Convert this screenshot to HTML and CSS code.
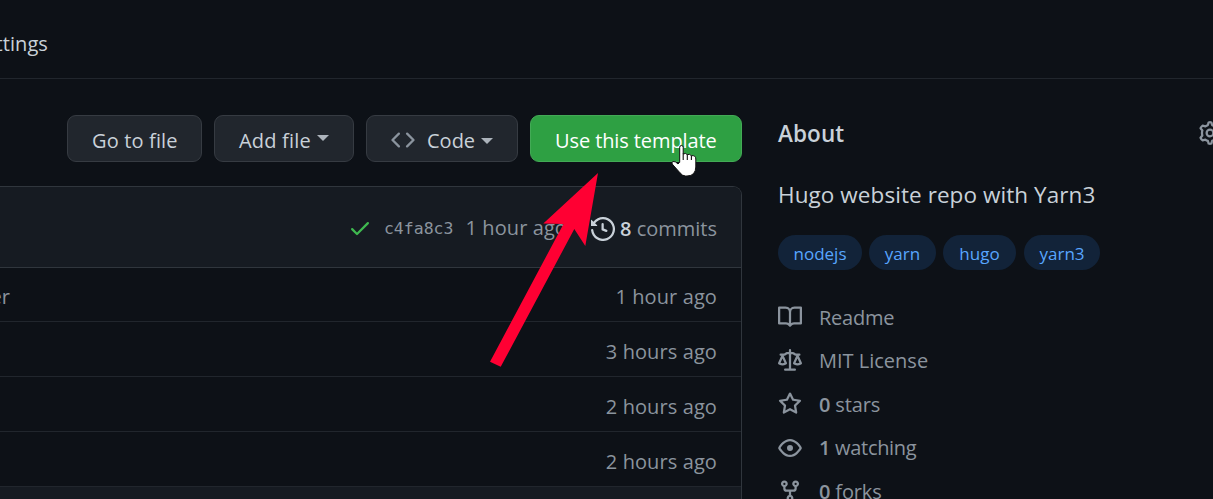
FILE: index.html
```
<!DOCTYPE html>
<html lang="en">
<head>
<meta charset="utf-8">
<title>Repository</title>
<link rel="stylesheet" href="styles.css">
</head>
<body>
<nav class="tabs"><span class="tab t-set">Settings</span></nav>
<div class="layout">
  <main class="main">
    <div class="actions">
      <button class="btn b-go"><span class="t-go">Go to file</span></button>
      <button class="btn b-add"><span class="t-add">Add file</span><i class="caret up"></i></button>
      <button class="btn b-code"><svg class="icon code" viewBox="0 0 16 16"><path d="M4.72 3.22a.75.75 0 011.06 1.06L2.06 8l3.72 3.72a.75.75 0 11-1.06 1.06L.47 8.53a.75.75 0 010-1.06l4.25-4.25zm6.56 0a.75.75 0 10-1.06 1.06L13.94 8l-3.72 3.72a.75.75 0 101.06 1.06l4.25-4.25a.75.75 0 000-1.06l-4.25-4.25z"/></svg><span class="t-code">Code</span><i class="caret"></i></button>
      <button class="btn primary b-use"><span class="t-use">Use this template</span></button>
    </div>
    <section class="files">
      <div class="commit">
        <svg class="icon check" viewBox="0 0 16 16"><path d="M13.78 4.22a.75.75 0 010 1.06l-7.25 7.25a.75.75 0 01-1.06 0L2.22 9.28a.75.75 0 011.06-1.06L6 10.94l6.72-6.72a.75.75 0 011.06 0z"/></svg>
        <span class="sha">c4fa8c3</span>
        <span class="when t-hour">1 hour ago</span>
        <svg class="icon history" viewBox="0 0 16 16"><path d="M1.643 3.143L.427 1.927A.25.25 0 000 2.104V5.75c0 .138.112.25.25.25h3.646a.25.25 0 00.177-.427L2.715 4.215a6.5 6.5 0 11-1.18 4.458.75.75 0 10-1.493.154 8.001 8.001 0 101.6-5.684zM7.75 4a.75.75 0 01.75.75v2.992l2.028.812a.75.75 0 01-.557 1.392l-2.5-1A.75.75 0 017 8.25v-3.5A.75.75 0 017.75 4z"/></svg>
        <span class="commits t-com"><b>8</b> commits</span>
      </div>
      <div class="row"><span class="msg">header</span><span class="t-hour">1 hour ago</span></div>
      <div class="row"><span class="t-hours">3 hours ago</span></div>
      <div class="row"><span class="t-hours">2 hours ago</span></div>
      <div class="row"><span class="t-hours">2 hours ago</span></div>
      <div class="readme"></div>
    </section>
  </main>
  <aside class="side">
    <div class="side-head"><h2 class="t-about">About</h2><svg class="icon gear" viewBox="0 0 16 16"><g fill="none" stroke="currentColor" stroke-width="1.5"><circle cx="8" cy="8" r="2.25"/><path stroke-linejoin="round" d="M7.1.95Q8 .6 8.9.95L9.4 2.7Q10.4 3 11.1 3.6L12.9 3.1Q13.9 3.8 14.3 4.8L13.1 6.3Q13.6 8 13.1 9.7L14.3 11.2Q13.9 12.2 12.9 12.9L11.1 12.4Q10.4 13 9.4 13.3L8.9 15.05Q8 15.4 7.1 15.05L6.6 13.3Q5.6 13 4.9 12.4L3.1 12.9Q2.1 12.2 1.7 11.2L2.9 9.7Q2.4 8 2.9 6.3L1.7 4.8Q2.1 3.8 3.1 3.1L4.9 3.6Q5.6 3 6.6 2.7Z"/></g></svg></div>
    <p class="desc"><span class="t-desc">Hugo website repo with Yarn3</span></p>
    <div class="topics"><a class="topic p1">nodejs</a><a class="topic p2">yarn</a><a class="topic p3">hugo</a><a class="topic p4">yarn3</a></div>
    <ul class="meta">
      <li><svg class="icon" viewBox="0 0 16 16"><path fill-rule="evenodd" d="M0 1.75A.75.75 0 01.75 1h4.253c1.227 0 2.317.59 3 1.501A3.744 3.744 0 0111.006 1h4.245a.75.75 0 01.75.75v10.5a.75.75 0 01-.75.75h-4.507a2.25 2.25 0 00-1.591.659l-.622.621a.75.75 0 01-1.06 0l-.622-.621A2.25 2.25 0 005.258 13H.75a.75.75 0 01-.75-.75V1.75zm8.755 3a2.25 2.25 0 012.25-2.25H14.5v9h-3.757c-.71 0-1.4.201-1.992.572l.004-7.322zm-1.504 7.324l.004-5.073-.002-2.253A2.25 2.25 0 005.003 2.5H1.5v9h3.757a3.75 3.75 0 011.994.574z"/></svg><span class="t-read">Readme</span></li>
      <li><svg class="icon" viewBox="0 0 16 16"><path fill-rule="evenodd" d="M8.75.75a.75.75 0 00-1.5 0V2h-.984c-.305 0-.604.08-.869.23l-1.288.737A.25.25 0 013.984 3H1.75a.75.75 0 000 1.5h.428L.066 9.192a.75.75 0 00.154.838l.53-.53-.53.53v.001l.002.002.002.002.006.006.016.015.045.04a3.514 3.514 0 00.686.45A4.492 4.492 0 003 11c.88 0 1.556-.22 2.023-.454a3.515 3.515 0 00.686-.45l.045-.04.016-.015.006-.006.002-.002.001-.002L5.25 9.5l.53.53a.75.75 0 00.154-.838L3.822 4.5h.162c.305 0 .604-.08.869-.23l1.289-.737a.25.25 0 01.124-.033h.984V13h-2.5a.75.75 0 000 1.5h6.5a.75.75 0 000-1.5h-2.5V3.5h.984a.25.25 0 01.124.033l1.29.736c.264.152.563.231.868.231h.162l-2.112 4.692a.75.75 0 00.154.838l.53-.53-.53.53v.001l.002.002.002.002.006.006.016.015.045.04a3.517 3.517 0 00.686.45A4.492 4.492 0 0013 11c.88 0 1.556-.22 2.023-.454a3.512 3.512 0 00.686-.45l.045-.04.01-.01.006-.005.006-.006.002-.002.001-.002-.529-.531.53.53a.75.75 0 00.154-.838L13.823 4.5h.427a.75.75 0 000-1.5h-2.234a.25.25 0 01-.124-.033l-1.29-.736A1.75 1.75 0 009.735 2H8.75V.75zM1.695 9.227c.285.135.718.273 1.305.273s1.02-.138 1.305-.273L3 6.327l-1.305 2.9zm10 0c.285.135.718.273 1.305.273s1.02-.138 1.305-.273L13 6.327l-1.305 2.9z"/></svg><span class="t-mit">MIT License</span></li>
      <li><svg class="icon" viewBox="0 0 16 16"><path fill-rule="evenodd" d="M8 .25a.75.75 0 01.673.418l1.882 3.815 4.21.612a.75.75 0 01.416 1.279l-3.046 2.97.719 4.192a.75.75 0 01-1.088.791L8 12.347l-3.766 1.98a.75.75 0 01-1.088-.79l.72-4.194L.818 6.374a.75.75 0 01.416-1.28l4.21-.611L7.327.668A.75.75 0 018 .25zm0 2.445L6.615 5.5a.75.75 0 01-.564.41l-3.097.45 2.24 2.184a.75.75 0 01.216.664l-.528 3.084 2.769-1.456a.75.75 0 01.698 0l2.77 1.456-.53-3.084a.75.75 0 01.216-.664l2.24-2.183-3.096-.45a.75.75 0 01-.564-.41L8 2.694v.001z"/></svg><span class="t-star"><b>0</b> stars</span></li>
      <li><svg class="icon" viewBox="0 0 16 16"><path fill-rule="evenodd" d="M1.679 7.932c.412-.621 1.242-1.75 2.366-2.717C5.175 4.242 6.527 3.5 8 3.5c1.473 0 2.824.742 3.955 1.715 1.124.967 1.954 2.096 2.366 2.717a.119.119 0 010 .136c-.412.621-1.242 1.75-2.366 2.717C10.825 11.758 9.473 12.5 8 12.5c-1.473 0-2.824-.742-3.955-1.715C2.92 9.818 2.09 8.69 1.679 8.068a.119.119 0 010-.136zM8 2c-1.981 0-3.67.992-4.933 2.078C1.797 5.169.88 6.423.43 7.1a1.619 1.619 0 000 1.798c.45.678 1.367 1.932 2.637 3.024C4.329 13.008 6.019 14 8 14c1.981 0 3.67-.992 4.933-2.078 1.27-1.091 2.187-2.345 2.637-3.023a1.619 1.619 0 000-1.798c-.45-.678-1.367-1.932-2.637-3.023C11.671 2.992 9.981 2 8 2zm0 8a2 2 0 100-4 2 2 0 000 4z"/></svg><span class="t-watch"><b>1</b> watching</span></li>
      <li><svg class="icon" viewBox="0 0 16 16"><path fill-rule="evenodd" d="M5 3.25a.75.75 0 11-1.5 0 .75.75 0 011.5 0zm0 2.122a2.25 2.25 0 10-1.5 0v.878A2.25 2.25 0 005.75 8.5h1.5v2.128a2.251 2.251 0 101.5 0V8.5h1.5a2.25 2.25 0 002.25-2.25v-.878a2.25 2.25 0 10-1.5 0v.878a.75.75 0 01-.75.75h-4.5A.75.75 0 015 6.25v-.878zm3.75 7.378a.75.75 0 11-1.5 0 .75.75 0 011.5 0zm3-8.75a.75.75 0 100-1.5.75.75 0 000 1.5z"/></svg><span class="t-fork"><b>0</b> forks</span></li>
    </ul>
  </aside>
</div>
<svg class="overlay" viewBox="0 0 1213 499">
  <path fill="#ff0033" d="M598 173L585.3 246L574.3 229L500.7 366.8L490 361.7L563.5 224L543.3 223.5Z"/>
  <path fill="#fff" stroke="#111" stroke-width="1" stroke-linejoin="round" d="M679.7 162.3V147.3Q679.7 145.5 681.4 145.5Q683.2 145.5 683.2 147.3V154Q685.9 152.6 687.2 154.6Q690 153.6 691.3 155.7Q695.7 155 695.8 159V167Q695.8 171 693.6 173.5Q691.5 176 687 176H685.5Q682.4 176 680 172.8L672.2 164Q671.4 162 673 161.5Q675.5 161 678 164Z"/>
  <path fill="none" stroke="#111" stroke-width="1.1" d="M683.2 153.5V160M687.3 154.6V160M691.4 155.7V160"/>
</svg>
</body>
</html>
```
FILE: styles.css
```
* { box-sizing: border-box; }
body {
  margin: 0;
  width: 1213px;
  height: 499px;
  overflow: hidden;
  position: relative;
  background: #0d1117;
  color: #c9d1d9;
  font: 20px/30px "Open Sans", "Noto Sans", sans-serif;
}
span { white-space: nowrap; }
.tabs {
  height: 79px;
  padding-top: 29px;
  border-bottom: 1px solid #21262d;
  display: flex;
}
.tab { width: 48px; display: flex; justify-content: flex-end; }
.t-set { letter-spacing: 0.1px; }
.layout { display: flex; height: 420px; }
.main { width: 742px; padding-top: 36px; flex: none; }
.actions { display: flex; justify-content: flex-end; gap: 12px; }
.btn {
  height: 47px;
  padding: 4px 0 0 24px;
  display: flex;
  align-items: center;
  font: inherit;
  color: #c9d1d9;
  background: #21262d;
  border: 1px solid #363b42;
  border-radius: 9px;
}
.primary { color: #fff; background: #2ea043; border-color: #43aa56; }
.b-go { width: 135px; }
.b-add { width: 140px; }
.b-code { width: 152px; }
.b-use { width: 212px; }
.t-go { letter-spacing: 0.15px; }
.t-add { letter-spacing: 0.2px; }
.t-use { letter-spacing: -0.1px; }
.caret {
  border: 6px solid transparent;
  border-top-color: #acb3bb;
  border-bottom: 0;
  margin-left: 6px;
}
.caret.up { margin-bottom: 5px; }
.icon { width: 24px; height: 24px; fill: currentColor; color: #8b949e; flex: none; display: block; }
.code { margin: 0 12px 2px 0; }
.files {
  margin-top: 24px;
  border: 1px solid #30363d;
  border-left: 0;
  border-bottom: 0;
  border-top-right-radius: 9px;
  overflow: hidden;
  height: 320px;
  color: #8b949e;
}
.commit {
  height: 81px;
  background: #161b22;
  border-bottom: 1px solid #30363d;
  display: flex;
  align-items: center;
  justify-content: flex-end;
  padding: 3px 24px 0 0;
}
.check { color: #3fb950; margin: 0 12px 2px 0; }
.sha { font: 16.5px/24px "DejaVu Sans Mono", monospace; margin-right: 12px; }
.when { margin: 0 24px 1px 0; }
.t-hour, .t-hours { letter-spacing: 0.1px; }
.history { color: #c9d1d9; margin-right: 5px; }
.commits b { color: #c9d1d9; }
b { font-weight: 600; }
.row {
  height: 55px;
  display: flex;
  align-items: center;
  justify-content: flex-end;
  padding: 5px 24px 0 0;
  border-bottom: 1px solid #21262d;
}
.row:nth-child(2) { height: 54px; }
.msg { width: 10px; display: flex; justify-content: flex-end; margin-right: auto; }
.readme { height: 13px; background: #161b22; }
.side { width: 435px; flex: none; margin-left: 36px; padding-top: 36px; }
.side-head { display: flex; justify-content: space-between; height: 40px; }
h2 { margin: 3px 0 0; font-size: 22.5px; line-height: 32px; font-weight: 600; letter-spacing: 0.1px; }
.gear { margin: 6px -9px 0 0; }
.desc { margin: 22px 0 0; font-size: 22.5px; line-height: 36px; letter-spacing: 0.07px; }
.topics { display: flex; margin-top: 22px; }
.topic {
  height: 35px;
  border-radius: 18px;
  background: #122339;
  color: #58a6ff;
  font-size: 17px;
  line-height: 37px;
  text-align: center;
  margin-right: 7px;
}
.p1 { width: 84px; }
.p2 { width: 67px; }
.p3 { width: 73px; margin-right: 8px; }
.p4 { width: 76px; }
.meta { list-style: none; margin: 32px 0 0; padding: 0; color: #8b949e; letter-spacing: -0.15px; }
.meta li { display: flex; align-items: center; height: 43.5px; padding-bottom: 13px; }
.meta span { padding-top: 1px; }
.meta .icon { margin-right: 17px; }
.t-read { letter-spacing: -0.25px; }
.t-mit { letter-spacing: 0; }
.t-watch { letter-spacing: -0.3px; }
.overlay { position: absolute; left: 0; top: 0; width: 1213px; height: 499px; }
```
